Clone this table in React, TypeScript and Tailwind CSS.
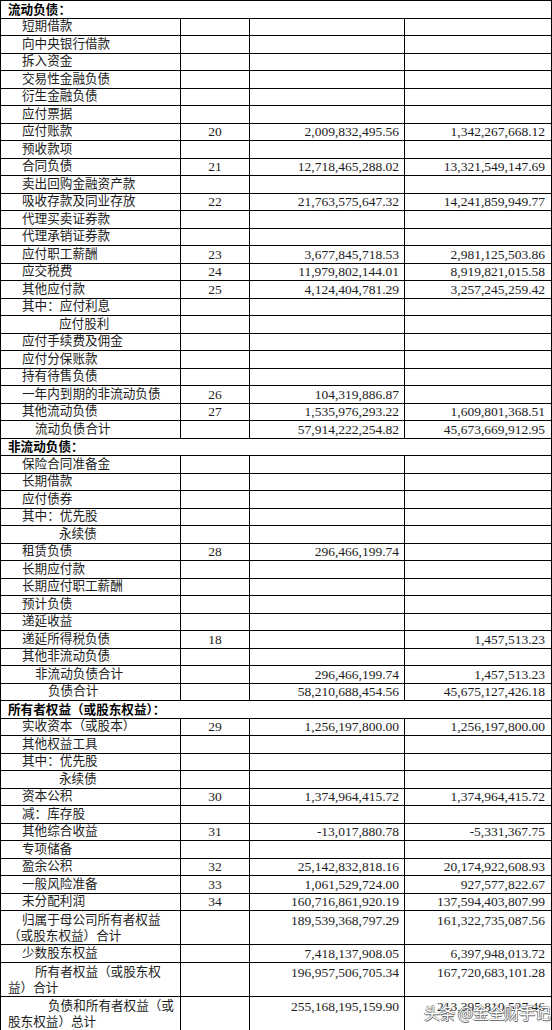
type Row = {
  label: string | [string, string];
  note?: string;
  cur?: string;
  prev?: string;
  indent?: number;
  section?: boolean;
};

const rows: Row[] = [
  { label: "流动负债：", section: true },
  { label: "短期借款" },
  { label: "向中央银行借款" },
  { label: "拆入资金" },
  { label: "交易性金融负债" },
  { label: "衍生金融负债" },
  { label: "应付票据" },
  { label: "应付账款", note: "20", cur: "2,009,832,495.56", prev: "1,342,267,668.12" },
  { label: "预收款项" },
  { label: "合同负债", note: "21", cur: "12,718,465,288.02", prev: "13,321,549,147.69" },
  { label: "卖出回购金融资产款" },
  { label: "吸收存款及同业存放", note: "22", cur: "21,763,575,647.32", prev: "14,241,859,949.77" },
  { label: "代理买卖证券款" },
  { label: "代理承销证券款" },
  { label: "应付职工薪酬", note: "23", cur: "3,677,845,718.53", prev: "2,981,125,503.86" },
  { label: "应交税费", note: "24", cur: "11,979,802,144.01", prev: "8,919,821,015.58" },
  { label: "其他应付款", note: "25", cur: "4,124,404,781.29", prev: "3,257,245,259.42" },
  { label: "其中：应付利息" },
  { label: "应付股利", indent: 58 },
  { label: "应付手续费及佣金" },
  { label: "应付分保账款" },
  { label: "持有待售负债" },
  { label: "一年内到期的非流动负债", note: "26", cur: "104,319,886.87" },
  { label: "其他流动负债", note: "27", cur: "1,535,976,293.22", prev: "1,609,801,368.51" },
  { label: "流动负债合计", indent: 34, cur: "57,914,222,254.82", prev: "45,673,669,912.95" },
  { label: "非流动负债：", section: true },
  { label: "保险合同准备金" },
  { label: "长期借款" },
  { label: "应付债券" },
  { label: "其中：优先股" },
  { label: "永续债", indent: 58 },
  { label: "租赁负债", note: "28", cur: "296,466,199.74" },
  { label: "长期应付款" },
  { label: "长期应付职工薪酬" },
  { label: "预计负债" },
  { label: "递延收益" },
  { label: "递延所得税负债", note: "18", prev: "1,457,513.23" },
  { label: "其他非流动负债" },
  { label: "非流动负债合计", indent: 34, cur: "296,466,199.74", prev: "1,457,513.23" },
  { label: "负债合计", indent: 47, cur: "58,210,688,454.56", prev: "45,675,127,426.18" },
  { label: "所有者权益（或股东权益）：", section: true },
  { label: "实收资本（或股本）", note: "29", cur: "1,256,197,800.00", prev: "1,256,197,800.00" },
  { label: "其他权益工具" },
  { label: "其中：优先股" },
  { label: "永续债", indent: 58 },
  { label: "资本公积", note: "30", cur: "1,374,964,415.72", prev: "1,374,964,415.72" },
  { label: "减：库存股" },
  { label: "其他综合收益", note: "31", cur: "-13,017,880.78", prev: "-5,331,367.75" },
  { label: "专项储备" },
  { label: "盈余公积", note: "32", cur: "25,142,832,818.16", prev: "20,174,922,608.93" },
  { label: "一般风险准备", note: "33", cur: "1,061,529,724.00", prev: "927,577,822.67" },
  { label: "未分配利润", note: "34", cur: "160,716,861,920.19", prev: "137,594,403,807.99" },
  {
    label: ["归属于母公司所有者权益", "（或股东权益）合计"],
    cur: "189,539,368,797.29",
    prev: "161,322,735,087.56",
  },
  { label: "少数股东权益", cur: "7,418,137,908.05", prev: "6,397,948,013.72" },
  {
    label: ["所有者权益（或股东权", "益）合计"],
    indent: 34,
    cur: "196,957,506,705.34",
    prev: "167,720,683,101.28",
  },
  {
    label: ["负债和所有者权益（或", "股东权益）总计"],
    indent: 47,
    cur: "255,168,195,159.90",
    prev: "213,395,810,527.46",
  },
];

const font = { fontFamily: '"Liberation Serif", "Noto Sans CJK SC", serif' };

function TableRow({ row, last }: { row: Row; last: boolean }) {
  if (row.section) {
    return (
      <div className="flex h-[17.5px] items-center border-b border-black pl-[7px]">
        <span
          className="text-[12.6px] font-bold leading-none text-black"
          style={{ fontFamily: '"Noto Sans CJK SC", sans-serif' }}
        >
          {row.label}
        </span>
      </div>
    );
  }

  const multi = Array.isArray(row.label);
  const indent = row.indent ?? 21;

  return (
    <div
      className={`relative grid grid-cols-[180px_69px_155px_146px] border-b border-black ${
        multi ? "h-[34px]" : "h-[17.5px]"
      }`}
    >
      <div
        className={`flex border-r border-black pl-[7px] ${
          multi ? "flex-col justify-start pt-px" : "items-center"
        }`}
      >
        {multi ? (
          <>
            <span className="text-[12.6px] leading-[16px]" style={{ paddingLeft: indent - 7 }}>
              {row.label[0]}
            </span>
            <span className="text-[12.6px] leading-[16px]">{row.label[1]}</span>
          </>
        ) : (
          <span className="text-[12.6px] leading-none" style={{ paddingLeft: indent - 7 }}>
            {row.label}
          </span>
        )}
      </div>
      <div className="flex items-center justify-center border-r border-black text-[13.5px] leading-none">
        {row.note}
      </div>
      <div
        className={`flex justify-end border-r border-black pr-[5px] text-[13.5px] leading-none ${
          multi ? "items-start pt-[3px]" : "items-center"
        }`}
      >
        {row.cur}
      </div>
      <div
        className={`flex justify-end pr-[6px] text-[13.5px] leading-none ${
          multi ? "items-start pt-[3px]" : "items-center"
        }`}
      >
        {row.prev}
      </div>
      {last ? (
        <div
          className="absolute left-[423px] top-[7px] text-[16px] leading-none tracking-[-0.5px] text-white"
          style={{
            fontFamily: '"Noto Sans CJK SC", sans-serif',
            textShadow:
              "0 0 1px #555, 0 0 1px #555, 0.5px 0.5px 0 #777, -0.5px -0.5px 0 #777",
          }}
        >
          头条 @金全财手记
        </div>
      ) : null}
    </div>
  );
}

export default function App() {
  return (
    <div className="w-[552px] bg-white text-[#1c1c1c]" style={font}>
      <div className="border-l border-t border-r border-black">
        {rows.map((row, i) => (
          <TableRow key={i} row={row} last={i === rows.length - 1} />
        ))}
      </div>
    </div>
  );
}
